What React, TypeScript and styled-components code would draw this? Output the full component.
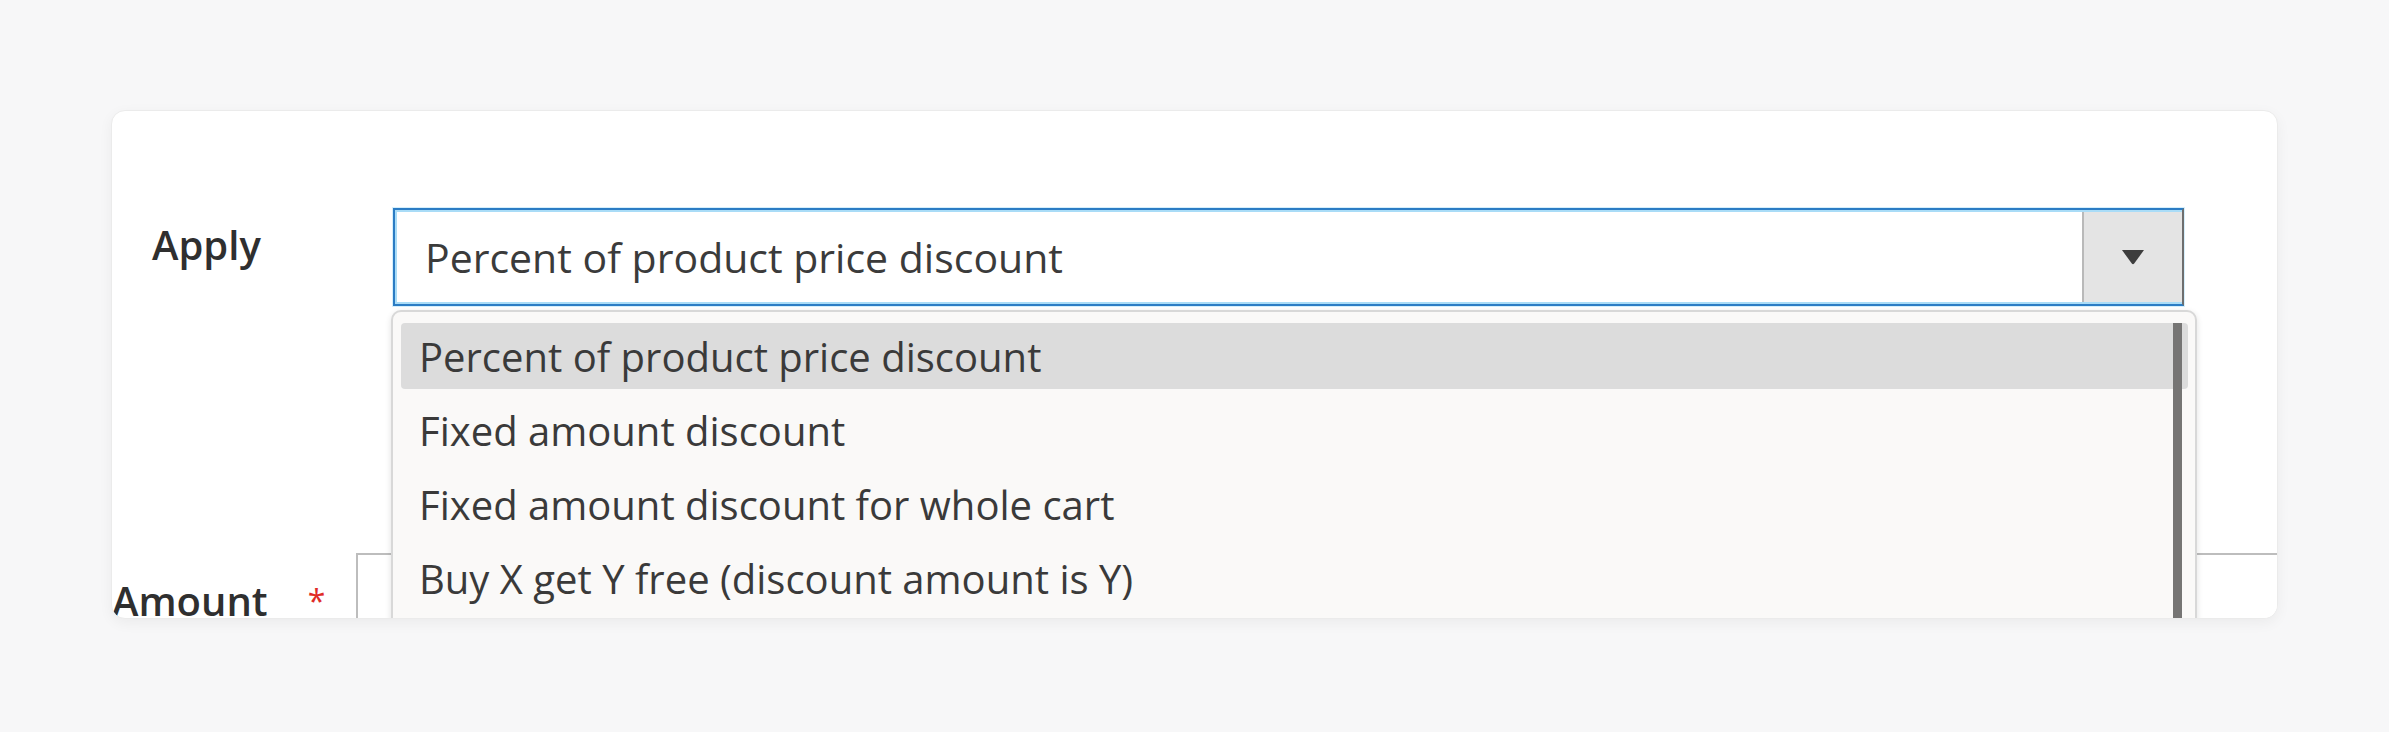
import React from 'react';
import styled, { createGlobalStyle } from 'styled-components';

const options = [
    'Percent of product price discount',
    'Fixed amount discount',
    'Fixed amount discount for whole cart',
    'Buy X get Y free (discount amount is Y)',
];

const GlobalStyle = createGlobalStyle`
    html, body {
        margin: 0;
        padding: 0;
        background: #f7f7f8;
    }
    body {
        width: 2389px;
        height: 732px;
        overflow: hidden;
        font-family: "Open Sans", "Noto Sans", sans-serif;
    }
`;

const Page = styled.main`
    padding: 110px 0 0 111px;
`;

const Card = styled.section`
    position: relative;
    box-sizing: border-box;
    width: 2167px;
    height: 509px;
    padding-top: 97px;
    background: #fff;
    border: 1px solid #ebebeb;
    border-radius: 14px;
    box-shadow: 0 4px 14px rgba(0, 0, 0, 0.05);
    overflow: hidden;
`;

const FieldRow = styled.div<{ $gapTop?: number }>`
    display: flex;
    align-items: flex-start;
    margin-top: ${p => p.$gapTop ?? 0}px;
`;

const LabelCell = styled.div<{ $width: number; $align: 'left' | 'right'; $padTop: number }>`
    flex: 0 0 ${p => p.$width}px;
    display: flex;
    justify-content: ${p => (p.$align === 'right' ? 'flex-end' : 'flex-start')};
    box-sizing: border-box;
    padding-left: ${p => (p.$align === 'left' ? 40 : 0)}px;
    padding-top: ${p => p.$padTop}px;
    white-space: nowrap;
`;

const Label = styled.label`
    font-size: 40px;
    line-height: 48px;
    font-weight: 600;
    color: #2f2f2f;
`;

const Required = styled.span`
    flex: 0 0 88px;
    box-sizing: border-box;
    padding: 32px 0 0 40px;
    font-size: 32px;
    line-height: 32px;
    color: #e02b27;
`;

const SelectBox = styled.div`
    box-sizing: border-box;
    display: flex;
    align-items: stretch;
    width: 1791px;
    height: 98px;
    border: 2px solid #2b7cc4;
    border-right-color: #6e6e6e;
    box-shadow: inset 0 0 0 2px #a9dcf7, 0 0 0 1px #d5effc;
    background: #fff;
`;

const SelectValue = styled.div`
    flex: 1;
    display: flex;
    align-items: center;
    padding-left: 30px;
    font-size: 41px;
    color: #3b3b3b;
`;

const ArrowButton = styled.div`
    flex: 0 0 98px;
    display: flex;
    align-items: center;
    justify-content: center;
    margin: 2px 0;
    background: #e4e4e4;
    border-left: 2px solid #b9b9b9;
`;

const AmountInput = styled.div`
    flex: 0 0 2000px;
    height: 140px;
    box-sizing: border-box;
    border: 2px solid #bdbdbd;
    background: #fff;
`;

const Dropdown = styled.ul`
    position: absolute;
    top: 199px;
    left: 279px;
    width: 1806px;
    height: 420px;
    box-sizing: border-box;
    margin: 0;
    padding: 11px 7px 0 8px;
    list-style: none;
    background: #faf9f8;
    border: 2px solid #d8d8d8;
    border-radius: 10px;
    box-shadow: 0 2px 6px rgba(0, 0, 0, 0.12);
`;

const Option = styled.li<{ $active?: boolean }>`
    display: flex;
    align-items: center;
    height: 66px;
    margin-bottom: 8px;
    padding-left: 18px;
    border-radius: 4px;
    background: ${p => (p.$active ? '#dcdcdc' : 'transparent')};
    font-size: 40px;
    color: #3a3a3a;
    white-space: nowrap;
`;

const ScrollThumb = styled.div`
    position: absolute;
    top: 11px;
    right: 13px;
    width: 9px;
    height: 400px;
    background: #767574;
`;

const App = () => {
    return (
        <Page>
            <GlobalStyle />
            <Card>
                <FieldRow>
                    <LabelCell $width={281} $align="left" $padTop={13}>
                        <Label>Apply</Label>
                    </LabelCell>
                    <SelectBox>
                        <SelectValue>{options[0]}</SelectValue>
                        <ArrowButton>
                            <svg width="24" height="16" viewBox="0 0 24 16">
                                <path d="M1 1 H23 L13.2 14.6 Q12 16 10.8 14.6 Z" fill="#3d3d3d" />
                            </svg>
                        </ArrowButton>
                    </SelectBox>
                </FieldRow>

                <FieldRow $gapTop={247}>
                    <LabelCell $width={154} $align="right" $padTop={24}>
                        <Label>Amount</Label>
                    </LabelCell>
                    <Required>*</Required>
                    <AmountInput />
                </FieldRow>

                <Dropdown>
                    {options.map((opt, i) => (
                        <Option key={opt} $active={i === 0}>
                            {opt}
                        </Option>
                    ))}
                    <ScrollThumb />
                </Dropdown>
            </Card>
        </Page>
    );
};

export default App;
